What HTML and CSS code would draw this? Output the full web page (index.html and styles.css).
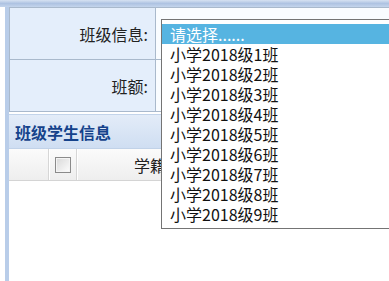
FILE: index.html
```html
<!DOCTYPE html>
<html lang="zh">

<head>
    <meta charset="UTF-8">
    <meta name="viewport" content="width=device-width, initial-scale=1.0">
    <title>班级学生信息</title>
    <link rel="stylesheet" href="styles.css">
</head>

<body>
    <div class="topbar"></div>
    <div class="main">
        <table class="form">
            <tr>
                <th>班级信息:</th>
                <td></td>
            </tr>
            <tr>
                <th>班额:</th>
                <td></td>
            </tr>
        </table><!-- .form end -->

        <div class="panel">
            <div class="panel_hd">班级学生信息</div>
            <div class="grid_hd">
                <div class="col num"></div>
                <div class="col chk"><span class="checkbox"></span></div>
                <div class="col xj">学籍号</div>
                <div class="col name">姓名</div>
            </div>
        </div><!-- .panel end -->
    </div><!-- .main end -->

    <ul class="droplist">
        <li class="on">请选择......</li>
        <li>小学2018级1班</li>
        <li>小学2018级2班</li>
        <li>小学2018级3班</li>
        <li>小学2018级4班</li>
        <li>小学2018级5班</li>
        <li>小学2018级6班</li>
        <li>小学2018级7班</li>
        <li>小学2018级8班</li>
        <li>小学2018级9班</li>
    </ul>
</body>

</html>
```

FILE: styles.css
```css
@charset "utf-8";

* {
    margin: 0;
    padding: 0;
    box-sizing: border-box;
}

li {
    list-style: none;
}

html,
body {
    height: 100%;
    overflow: hidden;
}

body {
    position: relative;
    width: 389px;
    background: #fff;
    color: #222;
    font-family: "Noto Sans CJK SC", "Microsoft YaHei", sans-serif;
    font-size: 16px;
    line-height: 1;
}

.topbar {
    height: 7px;
    background: linear-gradient(#d6e2f2, #aec3e2 50%, #c4d5ec);
}

.main {
    margin-left: 5px;
    height: calc(100% - 7px);
    border-left: 4px solid #b9cde9;
}

/* 폼 테이블 */
.form {
    width: 440px;
    border-collapse: collapse;
    border: 1px solid #a4b6cc;
}

.form th,
.form td {
    height: 52px;
    border: 1px solid #a9b9cc;
}

.form th {
    width: 146px;
    padding-right: 7px;
    text-align: right;
    font-weight: normal;
    background: #e4eefb;
}

.form td {
    background: #f9fcff;
}

.panel {
    margin-top: 2px;
    border-top: 1px solid #c3d4ea;
}

.panel_hd {
    height: 34px;
    line-height: 34px;
    padding-left: 6px;
    font-weight: bold;
    color: #15428b;
    background: linear-gradient(#e3ecf8, #cfdef2);
    border-bottom: 1px solid #c1d2e8;
}

.grid_hd {
    display: flex;
    height: 32px;
    background: linear-gradient(#fbfbfb, #eeeeee);
    border-bottom: 1px solid #d4d4d4;
}

.grid_hd .col {
    display: flex;
    align-items: center;
    justify-content: center;
    border-right: 1px solid #d6d6d6;
    box-shadow: 1px 0 0 #fff;
}

.grid_hd .num {
    width: 40px;
}

.grid_hd .chk {
    width: 28px;
}

.checkbox {
    width: 16px;
    height: 16px;
    border: 1px solid #8a8a8a;
    background: linear-gradient(135deg, #d8d8d8, #fdfdfd);
    box-shadow: inset 0 0 0 1px #f4f4f4;
}

.grid_hd .xj {
    width: 163px;
}

.grid_hd .name {
    width: 120px;
}

/* 드롭다운 목록 */
.droplist {
    position: absolute;
    top: 19px;
    left: 161px;
    width: 260px;
    padding: 4px 0;
    background: #fff;
    border: 1px solid #747474;
}

.droplist li {
    height: 20px;
    line-height: 20px;
    padding-left: 8px;
    color: #111;
    white-space: nowrap;
}

.droplist li.on {
    color: #fff;
    background: #56b4e1;
}
```
